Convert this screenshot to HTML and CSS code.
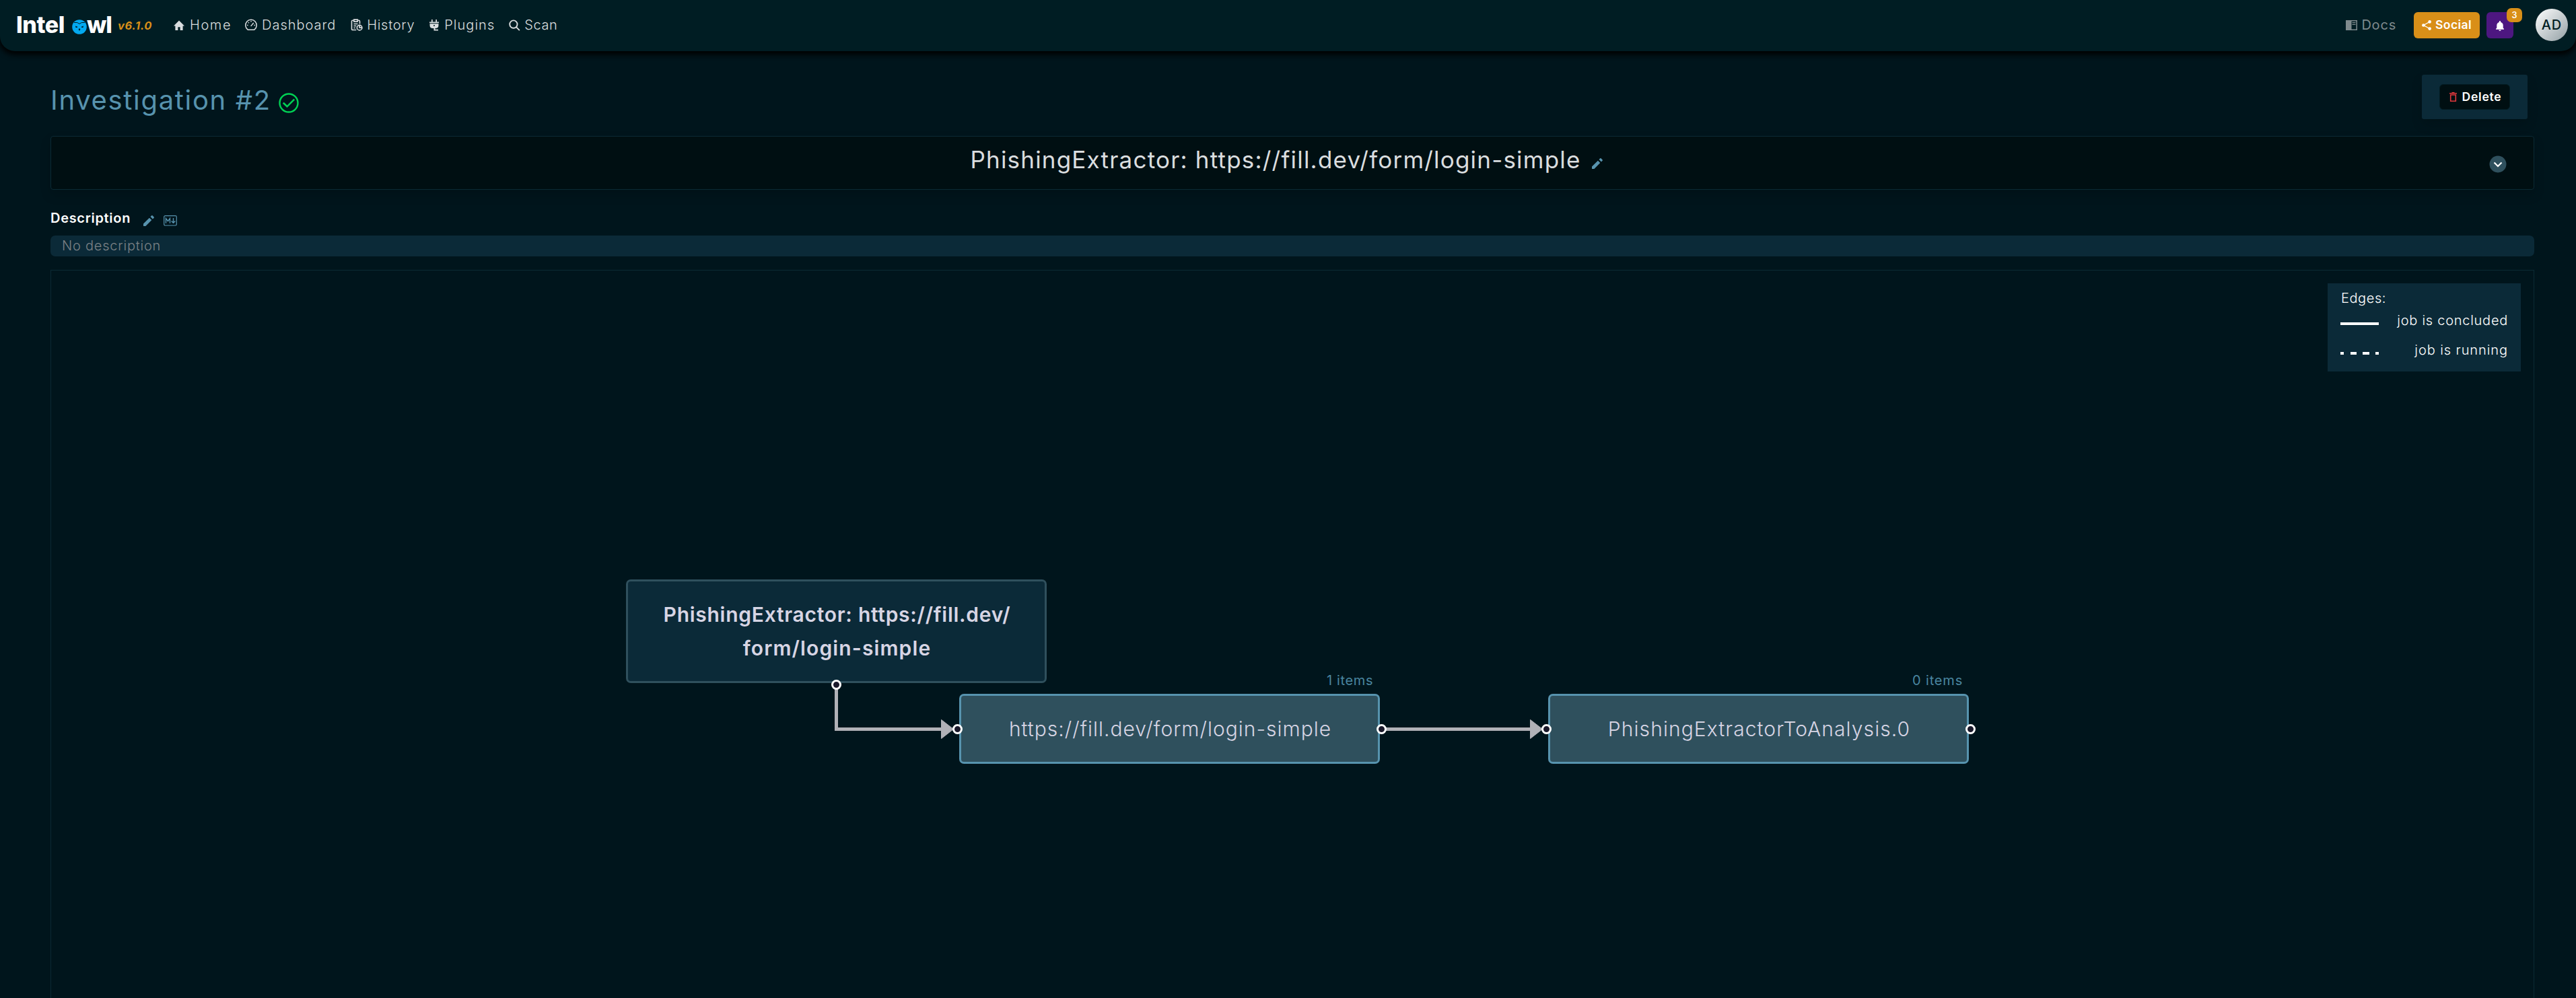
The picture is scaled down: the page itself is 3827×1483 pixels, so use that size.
FILE: index.html
```html
<!DOCTYPE html>
<html lang="en">
<head>
<meta charset="utf-8">
<title>IntelOwl - Investigation #2</title>
<link rel="stylesheet" href="styles.css">
</head>
<body>
<nav class="navbar">
  <a class="brand">
    <span class="brand-intel">Intel</span>
    <svg class="owl" viewBox="0 0 22 22"><circle cx="11" cy="11" r="10.8" fill="#03a9f0"/><path d="M3 4.500Q8.500 3.500 11 6.500Q13.500 3.500 19 4.500" fill="none" stroke="#001d23" stroke-width="1"/><path d="M5 9.500l3.300 1.200-.6 1.300H5.500zM17 9.500l-3.300 1.200.6 1.300h2.200zM11 13l1.400 1.500-1.400 2.500-1.400-2.500z" fill="#001d23"/></svg>
    <span class="brand-wl">wl</span>
  </a>
  <span class="version">v6.1.0</span>
  <a class="nav-item home"><svg viewBox="0 0 20 20"><path d="M8 20v-6h4v6h5v-8h3L10 2 0 12h3v8z" fill="currentColor"/></svg><span>Home</span></a>
  <a class="nav-item dash"><svg viewBox="0 0 24 24" fill="none" stroke="currentColor" stroke-width="2"><path d="M5.500 21.500A11 11 0 1 1 18.500 21.500Z" stroke-linejoin="round"/><path d="M11.500 14.500L17 8" /><path d="M12 4v2M4 12.500h2M18 12.500h2M6.500 7l1.300 1.300"/></svg><span>Dashboard</span></a>
  <a class="nav-item hist"><svg viewBox="0 0 24 24" fill="none" stroke="currentColor" stroke-width="2.200"><path d="M11 22H4a2 2 0 0 1-2-2V5a2 2 0 0 1 2-2h2M14 3h2a2 2 0 0 1 2 2v5"/><path d="M6.500 1.500h7v4h-7z"/><path d="M6 10h8M6 14h5M6 18h3"/><circle cx="17.500" cy="17.500" r="5"/><path d="M17.500 13v4.500H22"/></svg><span>History</span></a>
  <a class="nav-item plug"><svg viewBox="0 0 14 17" fill="currentColor"><path d="M3 0h1.700v4H3zM9.300 0H11v4H9.300zM0 3.500h14v1.800H0zM.5 6.300h13v2.200q0 4.500-4.500 4.500H8.500v1.800H13v1.800H6.500V13H5Q.5 13 .5 8.500z"/><circle cx="7" cy="9" r="1" fill="#001d23"/></svg><span>Plugins</span></a>
  <a class="nav-item scan"><svg viewBox="0 0 18 18" fill="none" stroke="currentColor" stroke-width="2"><circle cx="7.300" cy="7.500" r="6"/><path d="M11.500 11.800L16.800 17"/></svg><span>Scan</span></a>
  <div class="nav-right">
    <a class="nav-item docs"><svg viewBox="0 0 17 15"><path fill="currentColor" fill-rule="evenodd" d="M0 0h17v15H0zM8.500 1.500v12h7v-12z"/><path d="M9.500 3.700h5M9.500 6.300h5" stroke="currentColor" stroke-width="1.300"/></svg><span>Docs</span></a>
    <a class="btn social"><svg viewBox="0 0 14 15" fill="#fff"><path d="M11.500 2.500L2.500 7.500l9 5" fill="none" stroke="#fff" stroke-width="1.400"/><circle cx="11.600" cy="2.400" r="2.300"/><circle cx="2.400" cy="7.500" r="2.300"/><circle cx="11.600" cy="12.600" r="2.300"/></svg><span>Social</span></a>
    <a class="btn bell"><svg viewBox="0 0 12 15" fill="#fff"><path d="M6 15a1.700 1.700 0 0 0 1.700-1.500H4.300A1.700 1.700 0 0 0 6 15zM10.700 10.500V6.600Q10.700 3 7.200 2V1.200a1.200 1.200 0 0 0-2.400 0V2Q1.300 3 1.300 6.600v3.900L0 11.800v.9h12v-.9z"/></svg><span class="badge">3</span></a>
    <span class="avatar">AD</span>
  </div>
</nav>
<main>
  <header class="page-head">
    <h1><span>Investigation #2</span><svg viewBox="0 0 30 30" fill="none" stroke="#00d154"><circle cx="15" cy="15" r="13.500" stroke-width="2.400"/><path d="M6.800 14.800L12.500 20.300L23.200 9.700" stroke-width="2.600"/></svg></h1>
    <div class="actions"><a class="delete"><svg viewBox="0 0 11 14" fill="none" stroke="#e2393d"><path d="M0 1.800h11M3.500.7h4" stroke-width="1.400"/><path d="M1.700 4v9.200h7.600V4z" stroke-width="1.600"/></svg><span>Delete</span></a></div>
  </header>
  <section class="name-bar">
    <div class="side"></div>
    <div class="name"><span>PhishingExtractor: https://fill.dev/form/login-simple</span><svg class="pencil" viewBox="0 0 16 16"><path fill="#5793ae" d="M0 12.600V16h3.400L12.300 7.100 8.900 3.700zM15.700 3.700a1 1 0 0 0 0-1.200L13.500.3a1 1 0 0 0-1.200 0L10.500 2l3.400 3.400z"/></svg></div>
    <div class="side end"><svg class="toggle" viewBox="0 0 26 26"><circle cx="13" cy="13" r="12.500" fill="#2f505d"/><path d="M7.500 10.500L13 16l5.500-5.500" fill="none" stroke="#fff" stroke-width="2.200"/></svg></div>
  </section>
  <div class="desc-head"><span>Description</span><svg class="pencil" viewBox="0 0 16 16"><path fill="#5793ae" d="M0 12.600V16h3.400L12.300 7.100 8.900 3.700zM15.700 3.700a1 1 0 0 0 0-1.200L13.500.3a1 1 0 0 0-1.200 0L10.500 2l3.400 3.400z"/></svg><svg class="md" viewBox="0 0 20 16" fill="none" stroke="#5793ae"><rect x=".7" y=".7" width="18.600" height="14.300" rx="1.700" stroke-width="1.200"/><path d="M3.500 11.800V4.500L6.500 8.500L9.500 4.500V11.800M14.500 4v7M11.700 8.500L14.500 11.300L17.300 8.500" stroke-width="1.400"/></svg></div>
  <div class="desc-box">No description</div>
  <section class="graph">
    <svg class="edges" viewBox="76 402 3688 1081"><path d="M1242.500 1017V1083.500H1400M2052 1083.500H2276" fill="none" stroke="#b1b1b7" stroke-width="5"/><path d="M1398.500 1069.500L1416.500 1083.500L1398.500 1097.500ZM2273.500 1069.500L2291.500 1083.500L2273.500 1097.500Z" fill="#b1b1b7" stroke="#b1b1b7"/></svg>
    <div class="node root"><span class="line1">PhishingExtractor: https://fill.dev/</span><span class="line2">form/login-simple</span></div>
    <div class="count c1">1 items</div>
    <div class="node job j1"><span>https://fill.dev/form/login-simple</span></div>
    <div class="count c2">0 items</div>
    <div class="node job j2"><span>PhishingExtractorToAnalysis.0</span></div>
    <i class="handle h1"></i><i class="handle h2"></i><i class="handle h3"></i><i class="handle h4"></i><i class="handle h5"></i>
    <div class="legend">
      <div class="legend-title">Edges:</div>
      <div class="legend-row concluded"><svg viewBox="0 0 57 4"><path d="M0 2h57" stroke="#fff" stroke-width="4"/></svg><span>job is concluded</span></div>
      <div class="legend-row running"><svg viewBox="0 0 57 4"><path d="M0 2h5M15 2h9M33 2h10M52 2h5" stroke="#fff" stroke-width="4"/></svg><span>job is running</span></div>
    </div>
  </section>
</main>
</body>
</html>
```
FILE: styles.css
```css
* { box-sizing: border-box; }
body { margin: 0; width: 3827px; height: 1483px; overflow: hidden; background: #00151c; color: #dadddf; font: 400 20px/24px Inter, "Liberation Sans", sans-serif; position: relative; }
svg { display: block; flex: none; overflow: visible; }
span { white-space: nowrap; }
h1 { margin: 0; }
.navbar { display: flex; align-items: center; height: 76px; padding: 0 12px 2px 24px; background: #001d23; border-radius: 0 0 22px 22px; box-shadow: 0 3px 9px 2px #000; position: relative; font-weight: 300; }
.brand { display: flex; align-items: center; color: #fff; font: 800 34px/34px Inter, sans-serif; }
.brand-intel { letter-spacing: -.4px; }
.brand-wl { letter-spacing: -.98px; }
.owl { width: 22px; height: 22px; margin: 6px 0 0 11px; }
.version { margin: 2px 0 0 9px; font-size: 16.500px; font-weight: 700; font-style: italic; letter-spacing: .6px; color: #d98f18; }
.nav-item { display: flex; align-items: center; }
.home { margin-left: 32px; letter-spacing: 1.59px; }
.home svg { width: 16px; height: 16px; margin-right: 8px; }
.dash { margin-left: 20px; letter-spacing: .96px; }
.dash svg { width: 18px; height: 18px; margin-right: 7px; }
.hist { margin-left: 22px; letter-spacing: .71px; }
.hist svg { width: 18px; height: 18px; margin-right: 6px; }
.plug { margin-left: 22px; letter-spacing: 1.03px; }
.plug svg { width: 14px; height: 17px; margin-right: 8px; }
.scan { margin-left: 21px; letter-spacing: .57px; }
.scan svg { width: 17px; height: 17px; margin-right: 6px; }
.nav-right { display: flex; align-items: center; margin-left: auto; }
.docs { color: #7f8a8d; font-weight: 400; letter-spacing: .8px; }
.docs svg { width: 17px; height: 15px; margin-right: 6px; }
.btn { display: flex; align-items: center; justify-content: center; height: 39px; border-radius: 6px; color: #fff; position: relative; }
.social { width: 98px; margin-left: 26px; background: #d98f18; font-size: 17.600px; font-weight: 600; letter-spacing: .37px; }
.social svg { width: 14px; height: 15px; margin-right: 6px; }
.bell { width: 40px; margin-left: 10px; background: #4d1780; }
.bell svg { width: 12px; height: 15px; margin-top: 3px; }
.badge { position: absolute; left: 30px; top: -6px; width: 23px; height: 21px; border-radius: 7px; background: #d98f18; font: 600 12.500px/21px Inter, sans-serif; text-align: center; }
.avatar { display: flex; align-items: center; justify-content: center; width: 48px; height: 48px; margin-left: 33px; border-radius: 50%; background: linear-gradient(135deg, #fff, #93a0a5); color: #001d23; font-weight: 500; letter-spacing: 1px; }
main { padding: 35px 62px 0 75px; }
.page-head { display: flex; justify-content: space-between; height: 66px; padding-right: 10px; }
h1 { display: flex; align-items: center; padding-top: 10px; font-size: 40px; font-weight: 400; line-height: 48px; letter-spacing: 1.68px; color: #5793ae; }
h1 svg { width: 30px; height: 30px; margin: 8px 0 0 11px; }
.actions { width: 157px; height: 66px; padding: 14px 26px; border-radius: 3px; background: #0b2a38; box-shadow: 0 8px 16px rgba(0,0,0,.15); }
.delete { display: flex; align-items: center; justify-content: center; width: 105px; height: 38px; padding-left: 2px; border: 1px solid #021b21; border-radius: 6px; background: #000f12; color: #fff; font-size: 17.600px; font-weight: 600; letter-spacing: .73px; }
.delete svg { width: 11px; height: 14px; margin-right: 8px; }
.name-bar { display: flex; align-items: center; height: 80px; margin-top: 25px; padding-right: 18px; border: 1px solid #0b2a34; border-radius: 4px; background: #000f12; box-shadow: 0 8px 16px rgba(0,0,0,.15); }
.side { display: flex; flex: 1; }
.end { justify-content: flex-end; }
.toggle { width: 26px; height: 26px; margin: 4px 22px 0 0; }
.name { display: flex; align-items: center; padding-bottom: 10px; font-size: 35px; line-height: 48px; letter-spacing: 1.2px; }
.pencil { width: 16px; height: 16px; }
.name .pencil { margin: 12px 0 0 16px; }
.desc-head { display: flex; align-items: center; height: 24px; margin-top: 30px; color: #fff; font-weight: 600; letter-spacing: .69px; }
.desc-head .pencil { margin: 8px 0 0 19px; }
.md { width: 20px; height: 16px; margin: 8px 0 0 14px; }
.desc-box { height: 31px; margin-top: 14px; padding: 3px 0 0 17px; border-radius: 7px; background: #0b2a38; color: #7c8286; font-weight: 300; letter-spacing: .78px; }
.graph { position: relative; height: 1090px; margin-top: 20px; border: 1px solid #0b2a34; }
.edges { position: absolute; left: 0; top: 0; width: 3688px; height: 1081px; }
.node { position: absolute; display: flex; flex-direction: column; align-items: center; justify-content: center; width: 625px; padding-left: 2px; border-radius: 7px; font-size: 30px; line-height: 50px; color: #d7d5e4; }
.root { left: 854px; top: 459px; height: 154px; border: 3px solid #2f505d; background: #0b2a38; font-weight: 600; }
.line1 { letter-spacing: .72px; }
.line2 { letter-spacing: 1.12px; }
.job { top: 629px; height: 104px; border: 3px solid #5793ae; background: #2f505d; font-weight: 300; }
.j1 { left: 1349px; letter-spacing: 1px; }
.j2 { left: 2224px; letter-spacing: 1.08px; }
.count { position: absolute; top: 597px; color: #4a86a0; }
.c1 { left: 1895px; letter-spacing: .65px; }
.c2 { left: 2765px; letter-spacing: .85px; }
.handle { position: absolute; width: 15px; height: 15px; border: 3px solid #fff; border-radius: 50%; background: #1a192b; }
.h1 { left: 1159px; top: 608px; }
.h2 { left: 1339px; top: 674px; }
.h3 { left: 1969px; top: 674px; }
.h4 { left: 2214px; top: 674px; }
.h5 { left: 2844px; top: 674px; }
.legend { position: absolute; left: 3382px; top: 19px; width: 287px; height: 131px; padding: 10px 19px 0; background: #0b2a38; color: #fff; font-weight: 300; }
.legend-title { margin-left: 1px; letter-spacing: .58px; }
.legend-row { display: flex; align-items: center; justify-content: space-between; height: 24px; margin-top: 9px; }
.legend-row + .running { margin-top: 20px; }
.legend-row svg { width: 57px; height: 4px; margin-top: 10px; }
.concluded { letter-spacing: .74px; }
.running { letter-spacing: .92px; }
```
